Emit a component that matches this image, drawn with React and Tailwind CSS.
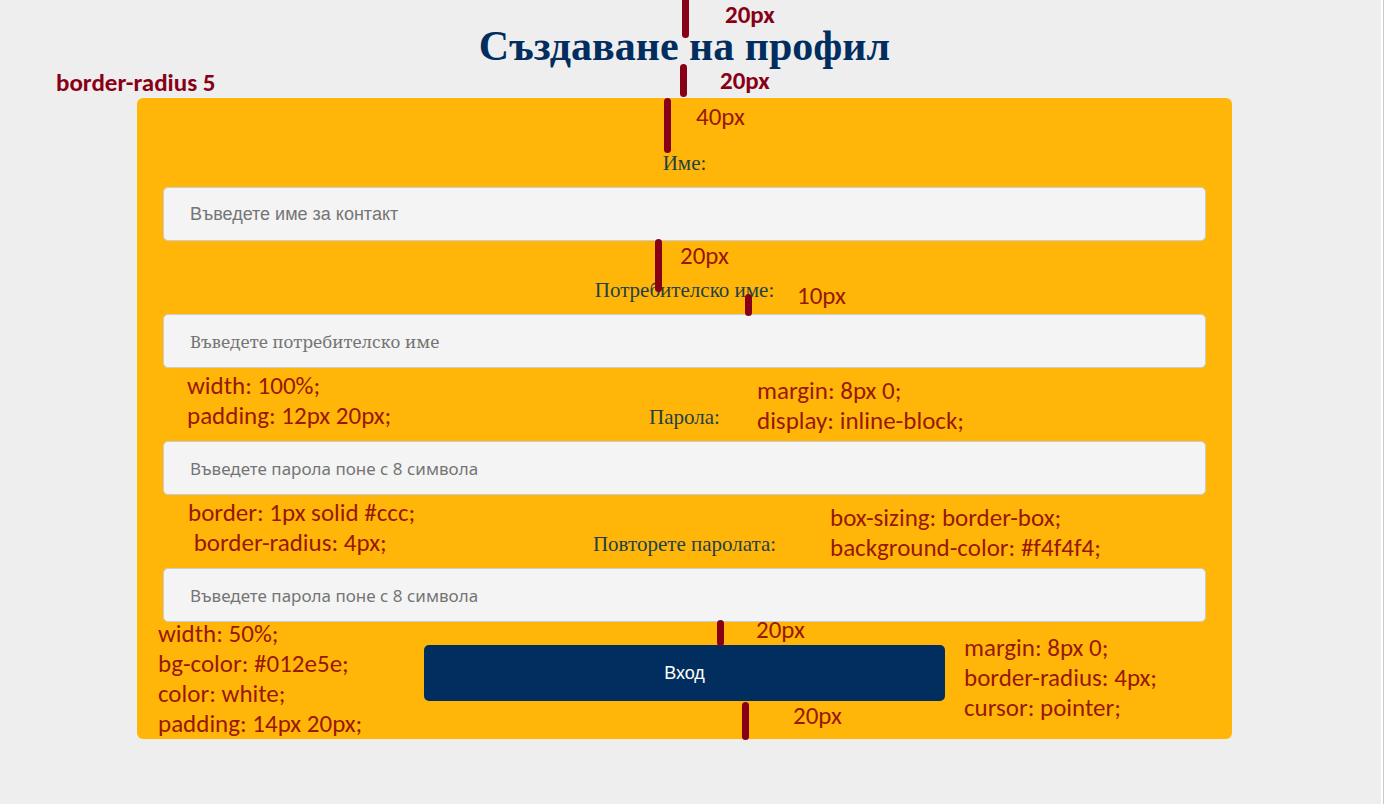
const fields = [
  { id: "name", label: "Име:", placeholder: "Въведете име за контакт", type: "text", font: "font-['Liberation_Sans',sans-serif] text-[18px]" },
  { id: "username", label: "Потребителско име:", placeholder: "Въведете потребителско име", type: "text", font: "font-['Noto_Serif','Liberation_Serif',serif] text-[17px]" },
  { id: "password", label: "Парола:", placeholder: "Въведете парола поне с 8 символа", type: "password", font: "font-['Noto_Sans','Liberation_Sans',sans-serif] text-[17px]" },
  { id: "repeat", label: "Повторете паролата:", placeholder: "Въведете парола поне с 8 символа", type: "password", font: "font-['Noto_Sans','Liberation_Sans',sans-serif] text-[17px]" },
];

const notes = [
  { place: "left-[725px] top-0", lines: ["20px"], tone: "font-bold text-[#880015]" },
  { place: "left-[720px] top-[66px]", lines: ["20px"], tone: "font-bold text-[#880015]" },
  { place: "left-[56px] top-[68px]", lines: ["border-radius 5"], tone: "font-bold text-[#880015]" },
  { place: "left-[696px] top-[102px]", lines: ["40px"], tone: "text-[#981806]" },
  { place: "left-[680px] top-[241px]", lines: ["20px"], tone: "text-[#981806]" },
  { place: "left-[797px] top-[281px]", lines: ["10px"], tone: "text-[#981806]" },
  { place: "left-[187px] top-[371px]", lines: ["width: 100%;", "padding: 12px 20px;"], tone: "text-[#981806]" },
  { place: "left-[757px] top-[376px]", lines: ["margin: 8px 0;", "display: inline-block;"], tone: "text-[#981806]" },
  { place: "left-[188px] top-[498px]", lines: ["border: 1px solid #ccc;", " border-radius: 4px;"], tone: "text-[#981806]" },
  { place: "left-[830px] top-[503px]", lines: ["box-sizing: border-box;", "background-color: #f4f4f4;"], tone: "text-[#981806]" },
  { place: "left-[158px] top-[619px]", lines: ["width: 50%;", "bg-color: #012e5e;", "color: white;", "padding: 14px 20px;"], tone: "text-[#981806]" },
  { place: "left-[756px] top-[615px]", lines: ["20px"], tone: "text-[#981806]" },
  { place: "left-[964px] top-[633px]", lines: ["margin: 8px 0;", "border-radius: 4px;", "cursor: pointer;"], tone: "text-[#981806]" },
  { place: "left-[793px] top-[701px]", lines: ["20px"], tone: "text-[#981806]" },
];

const marks = [
  "left-[682px] -top-2 h-[46px]",
  "left-[680px] top-16 h-[33px]",
  "left-[664px] top-[98px] h-[55px]",
  "left-[655px] top-[239px] h-[53px]",
  "left-[745px] top-[294px] h-[22px]",
  "left-[717px] top-[620px] h-[26px]",
  "left-[742px] top-[702px] h-[38px]",
];

function Field({ id, label, placeholder, type, font }) {
  return (
    <div>
      <label htmlFor={id} className="mb-3 block text-center text-[21px] leading-6 text-[#1f4145]">
        {label}
      </label>
      <input
        id={id}
        type={type}
        placeholder={placeholder}
        className={`block h-[54px] w-full rounded-[5px] border border-[#ccc] bg-[#f4f4f4] px-[26px] placeholder:text-[#757575] ${font}`}
      />
    </div>
  );
}

function Annotations() {
  return (
    <div className="pointer-events-none absolute inset-0 overflow-hidden font-['Carlito','Lato',sans-serif] text-[25px] leading-[30px]">
      {marks.map((mark) => (
        <span key={mark} className={`absolute w-[7px] rounded-full bg-[#880015] ${mark}`} />
      ))}
      {notes.map((note) => (
        <p key={note.place} className={`absolute whitespace-pre ${note.place} ${note.tone}`}>
          {note.lines.join("\n")}
        </p>
      ))}
    </div>
  );
}

export default function App() {
  return (
    <div className="min-h-screen border-r border-[#c8c8c8] bg-white pr-[2px]">
      <main className="relative min-h-screen bg-[#eee] pr-3 font-['Liberation_Serif',serif]">
        <h1 className="pt-[22px] pb-7 text-center text-[42px] leading-[48px] font-bold text-[#012e5e]">Създаване на профил</h1>
        <form className="mx-auto w-4/5 rounded-[6px] bg-[#ffb608] px-[26px] pt-[53px] pb-[38px]" onSubmit={(e) => e.preventDefault()}>
          <div className="flex flex-col gap-[37px]">
            {fields.map((field) => (
              <Field key={field.id} {...field} />
            ))}
          </div>
          <button type="submit" className="mx-auto mt-[23px] block h-14 w-1/2 cursor-pointer rounded-[5px] bg-[#012e5e] font-['Liberation_Sans',sans-serif] text-[18px] text-white">
            Вход
          </button>
        </form>
        <Annotations />
      </main>
    </div>
  );
}
